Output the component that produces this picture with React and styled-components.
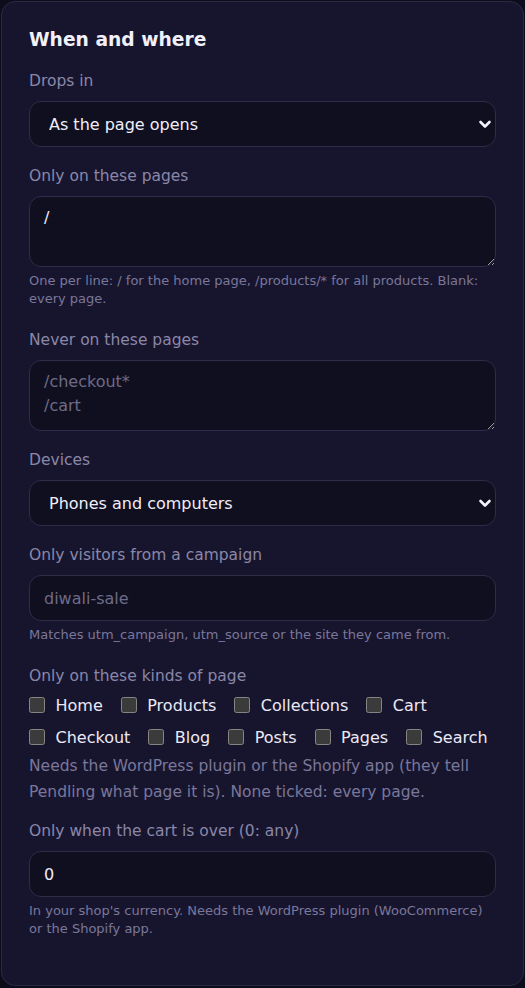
import { createGlobalStyle, styled } from 'styled-components';

const Global = createGlobalStyle`
  html, body {
    margin: 0;
    background: #0d0c1b;
    color-scheme: dark;
  }
  * {
    box-sizing: border-box;
  }
`;

const Card = styled.section`
  margin: 1px;
  padding: 25px 27px 44px;
  border: 1px solid #2a2844;
  border-radius: 14px;
  background: #17152e;
  font-family: 'DejaVu Sans', 'Liberation Sans', sans-serif;
  display: flex;
  flex-direction: column;
  gap: 17px;
`;

const Title = styled.h2`
  margin: 1px 0 0;
  font-size: 18.7px;
  line-height: 24px;
  font-weight: 700;
  color: #f2f0fa;
`;

const Field = styled.div`
  display: flex;
  flex-direction: column;
`;

const Label = styled.label`
  font-size: 15.5px;
  line-height: 22px;
  color: #8a87a8;
  margin: 1px 0 9px;
`;

const controlBase = `
  width: 100%;
  margin: 0;
  border: 1px solid #2e2c48;
  border-radius: 12px;
  background: #100f1f;
  color: #f0eef8;
  font-family: 'DejaVu Sans', 'Liberation Sans', sans-serif;
  font-size: 16px;
  outline: none;
  &::placeholder {
    color: #6e6b88;
  }
`;

const SelectWrap = styled.div`
  position: relative;
  svg {
    position: absolute;
    right: 4px;
    top: 50%;
    transform: translateY(-50%);
    pointer-events: none;
  }
`;

const Select = styled.select`
  ${controlBase}
  appearance: none;
  height: 46px;
  padding: 0 30px 0 19px;
`;

const Input = styled.input`
  ${controlBase}
  height: 46px;
  padding: 0 14px;
`;

const TextArea = styled.textarea`
  ${controlBase}
  height: ${({ $h }) => $h}px;
  padding: 9px 14px;
  line-height: 24px;
  resize: vertical;
`;

const Hint = styled.p`
  margin: 5px 0 3px;
  font-size: 13px;
  line-height: 18px;
  color: #7a779a;
`;

const CheckHint = styled.p`
  margin: 8px 0 -3px;
  font-size: 15.5px;
  line-height: 26px;
  color: #7a779a;
`;

const Checks = styled.div`
  display: flex;
  flex-wrap: wrap;
  column-gap: 18px;
  row-gap: 16px;
  margin-top: 1px;
`;

const Check = styled.label`
  display: flex;
  align-items: center;
  gap: 10.5px;
  height: 16px;
  font-size: 16px;
  color: #ebe9f4;
  input {
    width: 16px;
    height: 16px;
    margin: 0;
  }
`;

const Chevron = () => (
  <svg width="14" height="10" viewBox="0 0 14 10">
    <path d="M2.5 3l4.5 4.5L11.5 3" fill="none" stroke="#f4f2fb" strokeWidth="2.6" strokeLinecap="round" strokeLinejoin="round" />
  </svg>
);

const Dropdown = ({ value, children }) => (
  <SelectWrap>
    <Select defaultValue={value}>{children}</Select>
    <Chevron />
  </SelectWrap>
);

const kinds = ['Home', 'Products', 'Collections', 'Cart', 'Checkout', 'Blog', 'Posts', 'Pages', 'Search'];

const App = () => {
  return (
    <>
      <Global />
      <Card>
        <Title>When and where</Title>
        <Field>
          <Label>Drops in</Label>
          <Dropdown value="open">
            <option value="open">As the page opens</option>
          </Dropdown>
        </Field>
        <Field>
          <Label>Only on these pages</Label>
          <TextArea $h={71} defaultValue="/" />
          <Hint>One per line: / for the home page, /products/* for all products. Blank: every page.</Hint>
        </Field>
        <Field>
          <Label>Never on these pages</Label>
          <TextArea $h={71} placeholder={'/checkout*\n/cart'} />
        </Field>
        <Field>
          <Label>Devices</Label>
          <Dropdown value="all">
            <option value="all">Phones and computers</option>
          </Dropdown>
        </Field>
        <Field>
          <Label>Only visitors from a campaign</Label>
          <Input placeholder="diwali-sale" />
          <Hint>Matches utm_campaign, utm_source or the site they came from.</Hint>
        </Field>
        <Field>
          <Label>Only on these kinds of page</Label>
          <Checks>
            {kinds.map((k) => (
              <Check key={k}>
                <input type="checkbox" />
                {k}
              </Check>
            ))}
          </Checks>
          <CheckHint>
            Needs the WordPress plugin or the Shopify app (they tell Pendling what page it is). None ticked: every page.
          </CheckHint>
        </Field>
        <Field>
          <Label>Only when the cart is over (0: any)</Label>
          <Input defaultValue="0" />
          <Hint>In your shop's currency. Needs the WordPress plugin (WooCommerce) or the Shopify app.</Hint>
        </Field>
      </Card>
    </>
  );
};

export default App;
